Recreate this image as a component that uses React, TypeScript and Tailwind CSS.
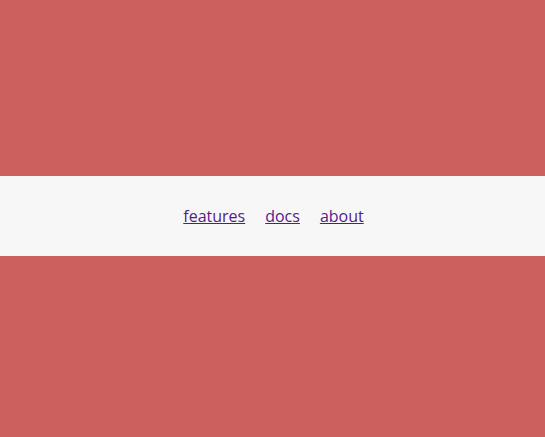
export default function App() {
  return (
    <div className="flex h-[437px] flex-col bg-[#cb605f] font-['Open_Sans',sans-serif]">
      <div className="h-[176px]" />
      <nav className="flex h-[80px] items-center justify-center gap-5 bg-[#f7f7f7] pl-[2px] text-[16px]">
        <a href="#features" className="text-[#551a8b] underline">features</a>
        <a href="#docs" className="text-[#551a8b] underline">docs</a>
        <a href="#about" className="text-[#551a8b] underline">about</a>
      </nav>
    </div>
  );
}
